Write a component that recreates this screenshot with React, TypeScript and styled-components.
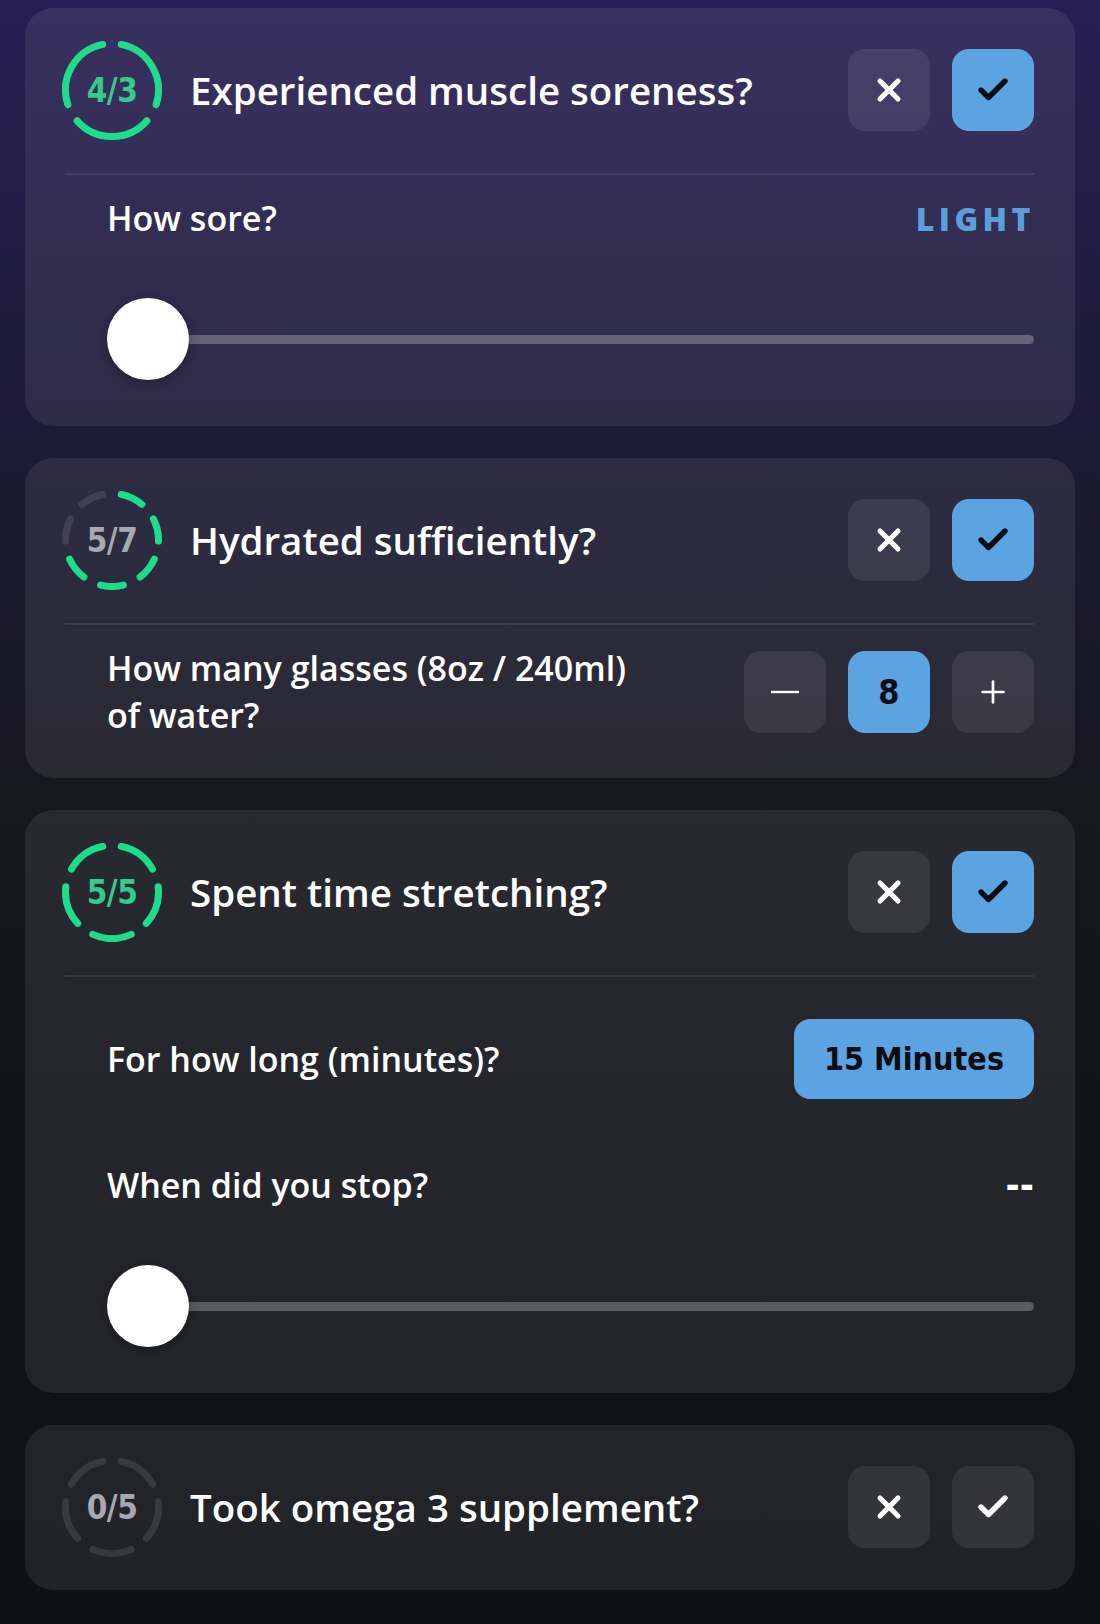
import React from 'react';
import styled, { createGlobalStyle } from 'styled-components';
import { X, Check, Plus } from 'lucide-react';

const GlobalStyle = createGlobalStyle`
  html, body {
    margin: 0;
    padding: 0;
    background: #0f1114;
  }
  body {
    font-family: "Open Sans", "Noto Sans", sans-serif;
    -webkit-font-smoothing: antialiased;
  }
`;

const Page = styled.div`
  min-height: 1624px;
  box-sizing: border-box;
  padding: 8px 25px 0;
  display: flex;
  flex-direction: column;
  gap: 32px;
  background: linear-gradient(
    180deg,
    #271f54 0px,
    #1d1a36 440px,
    #17171f 800px,
    #121419 1150px,
    #0f1114 1624px
  );
`;

const Card = styled.section`
  background: rgba(255, 255, 255, 0.08);
  border-radius: 28px;
`;

const Header = styled.div`
  display: flex;
  align-items: center;
  padding: 32px 41px 33px 37px;
`;

const Title = styled.h2`
  flex: 1;
  margin: 0 0 0 28px;
  font-size: 38.5px;
  font-weight: 600;
  color: #fff;
`;

const Actions = styled.div`
  display: flex;
  gap: 22px;
`;

const SquareButton = styled.button<{ $active?: boolean }>`
  width: 82px;
  height: 82px;
  padding: 0;
  border: 0;
  border-radius: 17px;
  display: flex;
  align-items: center;
  justify-content: center;
  background: ${(p) => (p.$active ? '#5ba3e1' : 'rgba(255, 255, 255, 0.08)')};
  color: ${(p) => (p.$active ? '#0b0d12' : '#fff')};
  font-family: "DejaVu Sans Condensed", "DejaVu Sans", sans-serif;
  font-weight: 700;
  font-size: 34px;
`;

const PillButton = styled(SquareButton)`
  width: 240px;
  height: 80px;
  border-radius: 16px;
  font-size: 32px;
`;

const Divider = styled.hr`
  margin: 0 41px 0 40px;
  border: 0;
  height: 2px;
  background: rgba(255, 255, 255, 0.08);
`;

const Body = styled.div<{ $top: number; $bottom: number }>`
  display: flex;
  flex-direction: column;
  padding: ${(p) => p.$top}px 41px ${(p) => p.$bottom}px 82px;
`;

const Row = styled.div<{ $gap?: number }>`
  display: flex;
  align-items: center;
  justify-content: space-between;
  margin-top: ${(p) => p.$gap ?? 0}px;
`;

const Label = styled.div`
  font-size: 34px;
  line-height: 46px;
  font-weight: 600;
  color: #fff;
`;

const WideLabel = styled(Label)`
  line-height: 47px;
`;

const Value = styled.div`
  font-size: 32px;
  font-weight: 800;
  letter-spacing: 4.5px;
  margin-right: -1px;
  color: #5a9fdc;
`;

const Dashes = styled.div`
  font-family: "DejaVu Sans Condensed", "DejaVu Sans", sans-serif;
  font-size: 38px;
  font-weight: 700;
  line-height: 46px;
  color: #fff;
`;

const SliderTrack = styled.div<{ $gap: number }>`
  position: relative;
  height: 82px;
  display: flex;
  align-items: center;
  margin-top: ${(p) => p.$gap}px;
`;

const Rail = styled.div`
  flex: 1;
  height: 9px;
  margin-left: 41px;
  border-radius: 5px;
  background: rgba(255, 255, 255, 0.25);
`;

const Thumb = styled.div`
  position: absolute;
  left: 0;
  top: 0;
  width: 82px;
  height: 82px;
  border-radius: 50%;
  background: #fff;
  box-shadow: 0 2px 12px rgba(0, 0, 0, 0.3);
`;

const RingBox = styled.div`
  display: grid;
  width: 100px;
  height: 100px;
  flex: none;
  & > * {
    grid-area: 1 / 1;
  }
`;

const RingText = styled.span<{ $done: boolean }>`
  align-self: center;
  justify-self: center;
  font-family: "DejaVu Sans Condensed", "DejaVu Sans", sans-serif;
  font-weight: 700;
  font-size: 33px;
  letter-spacing: -0.5px;
  color: ${(p) => (p.$done ? '#33cc8c' : '#a7a8b1')};
`;

const GREEN = '#1fdc8d';
const GREY = 'rgba(255, 255, 255, 0.1)';

const point = (a: number, r: number) => {
  const rad = (a * Math.PI) / 180;
  return `${(50 + r * Math.sin(rad)).toFixed(2)} ${(50 - r * Math.cos(rad)).toFixed(2)}`;
};

const Ring = ({ done, total }: { done: number; total: number }) => {
  const r = 46.5;
  const gapDeg = 23;
  const step = 360 / total;
  return (
    <RingBox>
      <svg width="100" height="100" viewBox="0 0 100 100">
        {Array.from({ length: total }).map((_, i) => {
          const a0 = i * step + gapDeg / 2;
          const a1 = (i + 1) * step - gapDeg / 2;
          const large = a1 - a0 > 180 ? 1 : 0;
          return (
            <path
              key={i}
              d={`M ${point(a0, r)} A ${r} ${r} 0 ${large} 1 ${point(a1, r)}`}
              fill="none"
              stroke={i < done ? GREEN : GREY}
              strokeWidth={7}
              strokeLinecap="round"
            />
          );
        })}
      </svg>
      <RingText $done={done >= total}>
        {done}/{total}
      </RingText>
    </RingBox>
  );
};

const Minus = () => (
  <svg width="30" height="4" viewBox="0 0 30 4">
    <line x1="1" y1="2" x2="29" y2="2" stroke="#fff" strokeWidth="2.4" />
  </svg>
);

const Question = ({
  done,
  total,
  title,
  answered = true,
}: {
  done: number;
  total: number;
  title: string;
  answered?: boolean;
}) => (
  <Header>
    <Ring done={done} total={total} />
    <Title>{title}</Title>
    <Actions>
      <SquareButton>
        <X size={36} strokeWidth={3.4} />
      </SquareButton>
      <SquareButton $active={answered}>
        <Check size={36} strokeWidth={3.6} />
      </SquareButton>
    </Actions>
  </Header>
);

const Slider = ({ gap }: { gap: number }) => (
  <SliderTrack $gap={gap}>
    <Rail />
    <Thumb />
  </SliderTrack>
);

export default function App() {
  return (
    <>
      <GlobalStyle />
      <Page>
        <Card>
          <Question done={4} total={3} title="Experienced muscle soreness?" />
          <Divider />
          <Body $top={20} $bottom={46}>
            <Row>
              <Label>How sore?</Label>
              <Value>LIGHT</Value>
            </Row>
            <Slider gap={57} />
          </Body>
        </Card>

        <Card>
          <Question done={5} total={7} title="Hydrated sufficiently?" />
          <Divider />
          <Body $top={20} $bottom={39}>
            <Row>
              <WideLabel>
                How many glasses (8oz / 240ml)
                <br />
                of water?
              </WideLabel>
              <Actions>
                <SquareButton>
                  <Minus />
                </SquareButton>
                <SquareButton $active>8</SquareButton>
                <SquareButton>
                  <Plus size={36} strokeWidth={1.8} />
                </SquareButton>
              </Actions>
            </Row>
          </Body>
        </Card>

        <Card>
          <Question done={5} total={5} title="Spent time stretching?" />
          <Divider />
          <Body $top={42} $bottom={46}>
            <Row>
              <Label>For how long (minutes)?</Label>
              <PillButton $active>15 Minutes</PillButton>
            </Row>
            <Row $gap={63}>
              <Label>When did you stop?</Label>
              <Dashes>--</Dashes>
            </Row>
            <Slider gap={57} />
          </Body>
        </Card>

        <Card>
          <Question done={0} total={5} title="Took omega 3 supplement?" answered={false} />
        </Card>
      </Page>
    </>
  );
}
